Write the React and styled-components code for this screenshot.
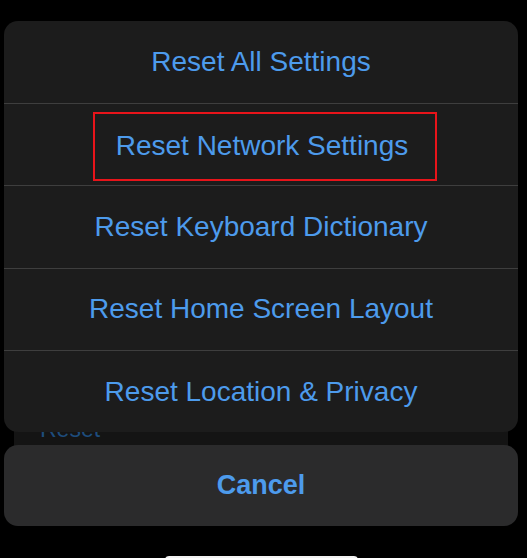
import styled, { createGlobalStyle } from "styled-components";

const GlobalStyle = createGlobalStyle`
  html, body {
    margin: 0;
    padding: 0;
    background: #000;
  }
  body {
    font-family: "Liberation Sans", Arial, sans-serif;
  }
`;

const Screen = styled.div`
  position: relative;
  width: 527px;
  height: 558px;
  overflow: hidden;
  background: #000;
  display: flex;
  flex-direction: column;
  padding: 21px 9px 0 4px;
  box-sizing: border-box;
  & > * {
    flex-shrink: 0;
  }
`;

// the settings list lying under the action sheet
const BehindCard = styled.div`
  position: absolute;
  left: 14px;
  right: 19px;
  top: 380px;
  height: 70px;
  background: #141414;
  display: flex;
  align-items: flex-end;
  padding: 0 0 9px 26px;
  box-sizing: border-box;
`;

const BehindLabel = styled.span`
  color: #1e4c7c;
  font-size: 23px;
  line-height: 1;
`;

const Sheet = styled.div`
  position: relative;
  z-index: 1;
  background: #1c1c1c;
  border-radius: 14px;
  overflow: hidden;
  display: flex;
  flex-direction: column;
`;

const Action = styled.div`
  box-sizing: border-box;
  height: ${(p) => (p.first ? "82px" : "82.3px")};
  flex-shrink: 0;
  display: flex;
  align-items: center;
  justify-content: center;
  border-top: ${(p) => (p.first ? "none" : "1px solid #3e3e3e")};
  color: #4d9bec;
  font-size: 28px;
`;

const Highlight = styled.span`
  border: 2px solid #e8141a;
  padding: 16px 27px 17px 21px;
  margin: 4px 0 0 8px;
`;

const CancelButton = styled.div`
  position: relative;
  z-index: 1;
  margin-top: 13px;
  height: 81px;
  background: #2b2b2c;
  border-radius: 14px;
  display: flex;
  align-items: center;
  justify-content: center;
  color: #4d9bec;
  font-size: 27px;
  font-weight: bold;
`;

const HomeBar = styled.div`
  align-self: center;
  margin-top: 30px;
  width: 193px;
  height: 8px;
  border-radius: 4px;
  background: #f2f2f2;
`;

const actions = [
  "Reset All Settings",
  "Reset Network Settings",
  "Reset Keyboard Dictionary",
  "Reset Home Screen Layout",
  "Reset Location & Privacy",
];

function App() {
  return (
    <>
      <GlobalStyle />
      <Screen>
        <BehindCard>
          <BehindLabel>Reset</BehindLabel>
        </BehindCard>
        <Sheet>
          {actions.map((label, i) => (
            <Action key={label} first={i === 0}>
              {i === 1 ? <Highlight>{label}</Highlight> : label}
            </Action>
          ))}
        </Sheet>
        <CancelButton>Cancel</CancelButton>
        <HomeBar />
      </Screen>
    </>
  );
}

export default App;
